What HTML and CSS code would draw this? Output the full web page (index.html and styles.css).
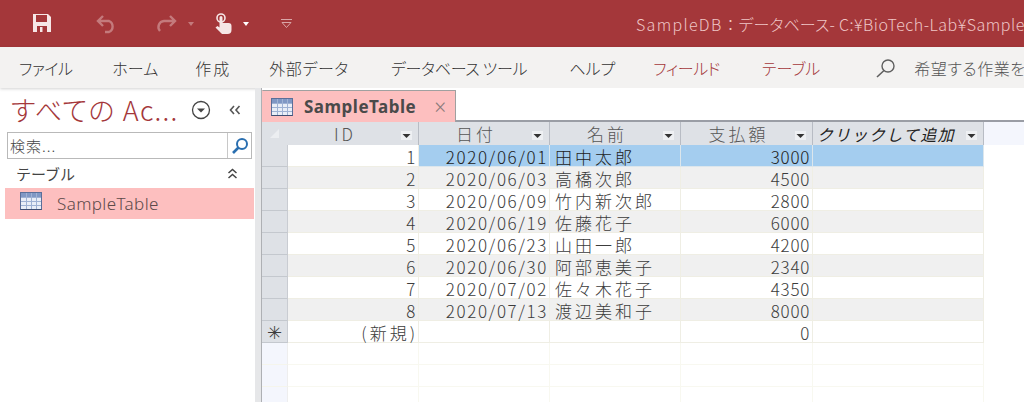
FILE: index.html
```html
<!DOCTYPE html>
<html lang="ja">
<head>
<meta charset="utf-8">
<title>SampleDB</title>
<link rel="stylesheet" href="styles.css">
</head>
<body>
<svg class="defs" width="0" height="0">
  <symbol id="tbl" viewBox="0 0 22 18">
    <rect x="0.5" y="0.5" width="21" height="17" fill="#e9eef7" stroke="#5b6f99"/>
    <rect x="1" y="1" width="20" height="4" fill="#7f97c4"/>
    <path d="M1 5.5h20M1 9.5h20M1 13.5h20M6.5 1v16M11.5 1v16M16.5 1v16" stroke="#9fb2d4" fill="none"/>
    <path d="M0.5 17.5h21" stroke="#3f4f73"/>
  </symbol>
  <symbol id="drop" viewBox="0 0 13 13">
    <rect x="1" y="2" width="11" height="9" fill="#eef0f3"/>
    <path d="M2.500 5h8L6.500 9z" fill="#333"/>
  </symbol>
</svg>
<header class="titlebar">
  <div class="qat">
    <svg class="q-save" width="18" height="18" viewBox="0 0 18 18"><path d="M0 0h15l3 3v15H0z" fill="#f6e6e6"/><rect x="3" y="1" width="11" height="7" fill="#a4373a"/><rect x="4" y="12" width="10" height="6" fill="#a4373a"/><rect x="7" y="13" width="2.500" height="5" fill="#f6e6e6"/></svg>
    <svg class="q-undo" width="21" height="20" viewBox="0 0 21 20"><path d="M7 2L2 7l5 5M2 7h11a6 6 0 0 1 0 11H9" fill="none" stroke="#c47a7c" stroke-width="2.400"/></svg>
    <svg class="q-redo" width="21" height="20" viewBox="0 0 21 20"><path d="M14 2l5 5-5 5M19 7H8a6 6 0 0 0-4 10" fill="none" stroke="#c47a7c" stroke-width="2.400"/></svg>
    <span class="caret dim"></span>
    <svg class="q-touch" width="17" height="22" viewBox="0 0 17 22"><circle cx="6" cy="5" r="4" fill="none" stroke="#f6e6e6" stroke-width="1.600"/><path d="M4.500 4.500a1.500 1.500 0 0 1 3 0V10h6a3 3 0 0 1 3 3v4a4 4 0 0 1-4 4H7L.5 14.500l2-1.500 2 1.500z" fill="#f6e6e6"/></svg>
    <span class="caret"></span>
    <svg class="q-more" width="11" height="9" viewBox="0 0 11 9"><path d="M0 .5h11M1 3.500h9L5.500 8.500z" fill="none" stroke="#d9a6a7"/></svg>
  </div>
  <div class="doc-title"><span class="dt-name">SampleDB</span><span class="dt-colon">：</span><span class="dt-kana">データベース-</span> C:¥BioTech-Lab¥Sample</div>
</header>
<nav class="ribbon">
  <span class="rt t1">ファイル</span>
  <span class="rt t2">ホーム</span>
  <span class="rt t3">作成</span>
  <span class="rt t4">外部データ</span>
  <span class="rt t5">データベース ツール</span>
  <span class="rt t6">ヘルプ</span>
  <span class="rt ctx t7">フィールド</span>
  <span class="rt ctx t8">テーブル</span>
  <svg class="r-search" width="20" height="20" viewBox="0 0 20 20"><circle cx="12" cy="8" r="6" fill="none" stroke="#5f5f5f" stroke-width="1.400"/><path d="M8 12.500L1 19" stroke="#5f5f5f" stroke-width="1.600"/></svg>
  <span class="tell">希望する作業を</span>
</nav>
<main class="work">
  <aside class="nav">
    <div class="nav-head">
      <span class="nav-title">すべての Ac...</span>
      <svg class="nav-menu" width="20" height="20" viewBox="0 0 20 20"><circle cx="10" cy="10" r="8.500" fill="none" stroke="#444" stroke-width="1.300"/><path d="M6 8.500h8L10 12.500z" fill="#444"/></svg>
      <svg class="nav-shut" width="12" height="10" viewBox="0 0 12 10"><path d="M5 1L1.500 5 5 9M10.500 1L7 5l3.500 4" fill="none" stroke="#555" stroke-width="1.600"/></svg>
    </div>
    <div class="nav-search">
      <span class="ns-text">検索...</span>
      <span class="ns-btn"><svg width="18" height="18" viewBox="0 0 18 18"><circle cx="11" cy="7" r="5" fill="none" stroke="#2a6fb0" stroke-width="2"/><path d="M7.500 10.500L2 16" stroke="#2a6fb0" stroke-width="2.600"/></svg></span>
    </div>
    <div class="nav-group">
      <span>テーブル</span>
      <svg width="11" height="11" viewBox="0 0 11 11"><path d="M1.500 5L5.500 1.500 9.500 5M1.500 10L5.500 6.500 9.500 10" fill="none" stroke="#444" stroke-width="1.500"/></svg>
    </div>
    <div class="nav-item"><svg class="ti" width="22" height="18"><use href="#tbl"/></svg><span>SampleTable</span></div>
  </aside>
  <section class="doc">
    <div class="tabs">
      <div class="tab"><svg class="ti" width="22" height="18"><use href="#tbl"/></svg><span class="tab-name">SampleTable</span><span class="tab-x">×</span></div>
      <div class="tab-rest"></div>
    </div>
    <div class="sheet">
      <div class="corner"><i></i></div>
      <div class="hd"><span>ID</span><svg width="13" height="13"><use href="#drop"/></svg></div>
      <div class="hd"><span>日付</span><svg width="13" height="13"><use href="#drop"/></svg></div>
      <div class="hd"><span>名前</span><svg width="13" height="13"><use href="#drop"/></svg></div>
      <div class="hd"><span>支払額</span><svg width="13" height="13"><use href="#drop"/></svg></div>
      <div class="hd add"><span>クリックして追加</span><svg width="13" height="13"><use href="#drop"/></svg></div>
      <div class="blank top"></div>

      <div class="sel"></div><div class="c r">1</div><div class="c r d hl">2020/06/01</div><div class="c hl">田中太郎</div><div class="c r hl">3000</div><div class="c hl"></div><div class="blank"></div>
      <div class="sel"></div><div class="c r alt">2</div><div class="c r d alt">2020/06/03</div><div class="c alt">高橋次郎</div><div class="c r alt">4500</div><div class="c alt"></div><div class="blank"></div>
      <div class="sel"></div><div class="c r">3</div><div class="c r d">2020/06/09</div><div class="c">竹内新次郎</div><div class="c r">2800</div><div class="c"></div><div class="blank"></div>
      <div class="sel"></div><div class="c r alt">4</div><div class="c r d alt">2020/06/19</div><div class="c alt">佐藤花子</div><div class="c r alt">6000</div><div class="c alt"></div><div class="blank"></div>
      <div class="sel"></div><div class="c r">5</div><div class="c r d">2020/06/23</div><div class="c">山田一郎</div><div class="c r">4200</div><div class="c"></div><div class="blank"></div>
      <div class="sel"></div><div class="c r alt">6</div><div class="c r d alt">2020/06/30</div><div class="c alt">阿部恵美子</div><div class="c r alt">2340</div><div class="c alt"></div><div class="blank"></div>
      <div class="sel"></div><div class="c r">7</div><div class="c r d">2020/07/02</div><div class="c">佐々木花子</div><div class="c r">4350</div><div class="c"></div><div class="blank"></div>
      <div class="sel"></div><div class="c r alt">8</div><div class="c r d alt">2020/07/13</div><div class="c alt">渡辺美和子</div><div class="c r alt">8000</div><div class="c alt"></div><div class="blank"></div>
      <div class="sel star">✳</div><div class="c r nw">(新規)</div><div class="c"></div><div class="c"></div><div class="c r">0</div><div class="c"></div><div class="blank"></div>

      <div class="lead"></div><div class="e"></div><div class="e"></div><div class="e"></div><div class="e"></div><div class="e"></div><div class="blank"></div>
      <div class="lead"></div><div class="e"></div><div class="e"></div><div class="e"></div><div class="e"></div><div class="e"></div><div class="blank"></div>
      <div class="lead"></div><div class="e"></div><div class="e"></div><div class="e"></div><div class="e"></div><div class="e"></div><div class="blank"></div>
    </div>
  </section>
</main>
</body>
</html>
```

FILE: styles.css
```css
* { box-sizing: border-box; }
html, body { margin: 0; height: 100%; overflow: hidden; background: #fff; }
body { width: 1024px; height: 402px; font-family: "Noto Sans CJK JP", "Noto Sans", sans-serif; color: #444; display: flex; flex-direction: column; }
.defs { display: block; height: 0; }
.titlebar { height: 47px; flex: none; background: #a4373a; display: flex; align-items: center; overflow: hidden; }
.qat { width: 636px; flex: none; display: flex; align-items: center; height: 100%; }
.q-save { margin-left: 33px; margin-top: -1px; }
.q-undo { margin-left: 45px; }
.q-redo { margin-left: 39px; }
.caret { width: 0; height: 0; border-left: 3.500px solid transparent; border-right: 3.500px solid transparent; border-top: 4px solid #fff; margin-left: 11px; }
.caret.dim { border-top-color: #c47a7c; }
.q-touch { margin-left: 21px; }
.q-more { margin-left: 32px; }
.doc-title { color: #efc6c6; font-size: 16px; white-space: nowrap; font-weight: 300; font-feature-settings: "palt"; letter-spacing: .5px; }
.dt-name { letter-spacing: 1.300px; }
.dt-colon { font-feature-settings: normal; letter-spacing: 0; }
.dt-kana { letter-spacing: .1px; }

.ribbon { height: 41px; flex: none; background: #f3f2f1; display: flex; align-items: center; font-size: 16px; box-shadow: 0 1px 3px rgba(0,0,0,.18); position: relative; white-space: nowrap; overflow: hidden; font-weight: 300; color: #333; font-feature-settings: "palt"; }
.rt { flex: none; }
.t1 { margin-left: 19px; letter-spacing: -.5px; }
.t2 { margin-left: 40px; }
.t3 { margin-left: 37px; letter-spacing: 2px; }
.t4 { margin-left: 38px; letter-spacing: .6px; }
.t5 { margin-left: 42px; letter-spacing: -.3px; }
.t6 { margin-left: 42px; }
.t7 { margin-left: 38px; letter-spacing: -.4px; }
.t8 { margin-left: 42px; }
.ctx { color: #a4373a; }
.r-search { margin-left: 56px; flex: none; }
.tell { margin-left: 18px; color: #555; letter-spacing: .5px; }

.work { flex: 1; display: flex; min-height: 0; }
.nav { width: 255px; flex: none; padding-top: 8px; background: #fff; }
.nav-head { display: flex; align-items: center; height: 28px; padding-left: 11px; }
.nav-title { font-size: 27px; line-height: 28px; color: #a4373a; width: 179px; white-space: nowrap; font-weight: 300; font-feature-settings: "palt"; letter-spacing: 1.200px; }
.nav-menu { margin-left: 1px; }
.nav-shut { margin-left: 18px; }
.nav-search { display: flex; height: 27px; margin: 8px 3px 0 7px; border: 1px solid #b9b9b9; align-items: center; }
.ns-text { flex: 1; padding-left: 2px; font-size: 15px; font-weight: 300; letter-spacing: 1px; line-height: 25px; }
.ns-btn { width: 24px; height: 100%; border-left: 1px solid #c8c8c8; display: flex; align-items: center; justify-content: center; }
.nav-group { display: flex; justify-content: space-between; align-items: center; height: 29px; padding: 0 17px 0 16px; font-size: 15px; font-weight: 400; line-height: 29px; }
.nav-item { margin: 0 1px 0 5px; height: 31px; background: #fdbfbf; display: flex; align-items: center; font-size: 17px; color: #5c4a4a; font-weight: 300; }
.nav-item .ti { margin: -5px 0 0 15px; }
.nav-item span { margin-left: 15px; font-family: "Noto Sans", sans-serif; letter-spacing: .4px; }

.doc { flex: 1; min-width: 0; border-left: 6px solid #e6e7e9; padding-left: 1px; background: linear-gradient(#aeb0b4, #aeb0b4) left / 1px 100% no-repeat, #fff; position: relative; }
.tabs { height: 34px; padding-top: 2px; display: flex; }
.tab { width: 194px; height: 32px; flex: none; background: #fdbfbf; border: 1px solid #a0a0a0; border-bottom: 0; border-left-color: #fdbfbf; display: flex; align-items: center; padding-left: 8px; }
.tab-name { margin-left: 11px; font: 700 17px "Noto Sans", sans-serif; letter-spacing: .5px; color: #4a4a4a; }
.tab-x { margin-left: 18px; font: 300 21px "Noto Sans", sans-serif; color: #8a7a7a; }
.tab-rest { flex: 1; height: 32px; border-bottom: 2px solid #9a9da5; }

.sheet { display: grid; grid-template-columns: 26px 131px 131px 131px 132px 171px 1fr; grid-template-rows: 23px repeat(12, 22px); font-size: 17px; font-weight: 300; color: #3c3c3c; }
.corner { background: #dee1e6; padding: 7px 0 0 8px; }
.corner i { display: block; width: 0; height: 0; border-left: 9px solid transparent; border-bottom: 9px solid #eceef1; }
.hd { background: #dee1e6; border-right: 1px solid #b8bcc4; display: flex; align-items: center; padding-right: 5px; color: #555; line-height: 22px; }
.hd span { flex: 1; text-align: center; letter-spacing: 3px; padding-left: 2px; }
.hd svg { flex: none; margin-top: 3px; }
.hd.add { font-style: italic; font-weight: 400; color: #222; padding-left: 4px; }
.hd.add span { letter-spacing: 1.300px; text-align: left; font-size: 16px; padding-left: 0; }
.blank { background: #fff; }
.blank.top { background: #f4f6fd; }
.sel { background: #dee1e6; border-bottom: 1px solid #c4c8ce; border-right: 1px solid #c9ccd2; display: flex; align-items: center; justify-content: center; font-size: 18px; line-height: 21px; }
.c { border-right: 1px solid #efeee4; border-bottom: 1px solid #efeee4; line-height: 24px; height: 22px; padding: 0 0 0 5px; white-space: nowrap; letter-spacing: 3px; }
.c.r { text-align: right; letter-spacing: .7px; padding-right: 2px; }
.c.d { letter-spacing: 1.600px; padding-right: 1px; }
.c.nw { letter-spacing: 3px; padding-right: 0; }
.alt { background: #f0f0f0; }
.hl, .hl.c { background: #a4cdef; border-color: #dce6ec; color: #222; }
.lead { background: #f4f6fd; border-bottom: 1px solid #f5f5ec; border-right: 1px solid #eee; }
.e { border-right: 1px solid #f8f8f0; border-bottom: 1px solid #f8f8f0; }
```
